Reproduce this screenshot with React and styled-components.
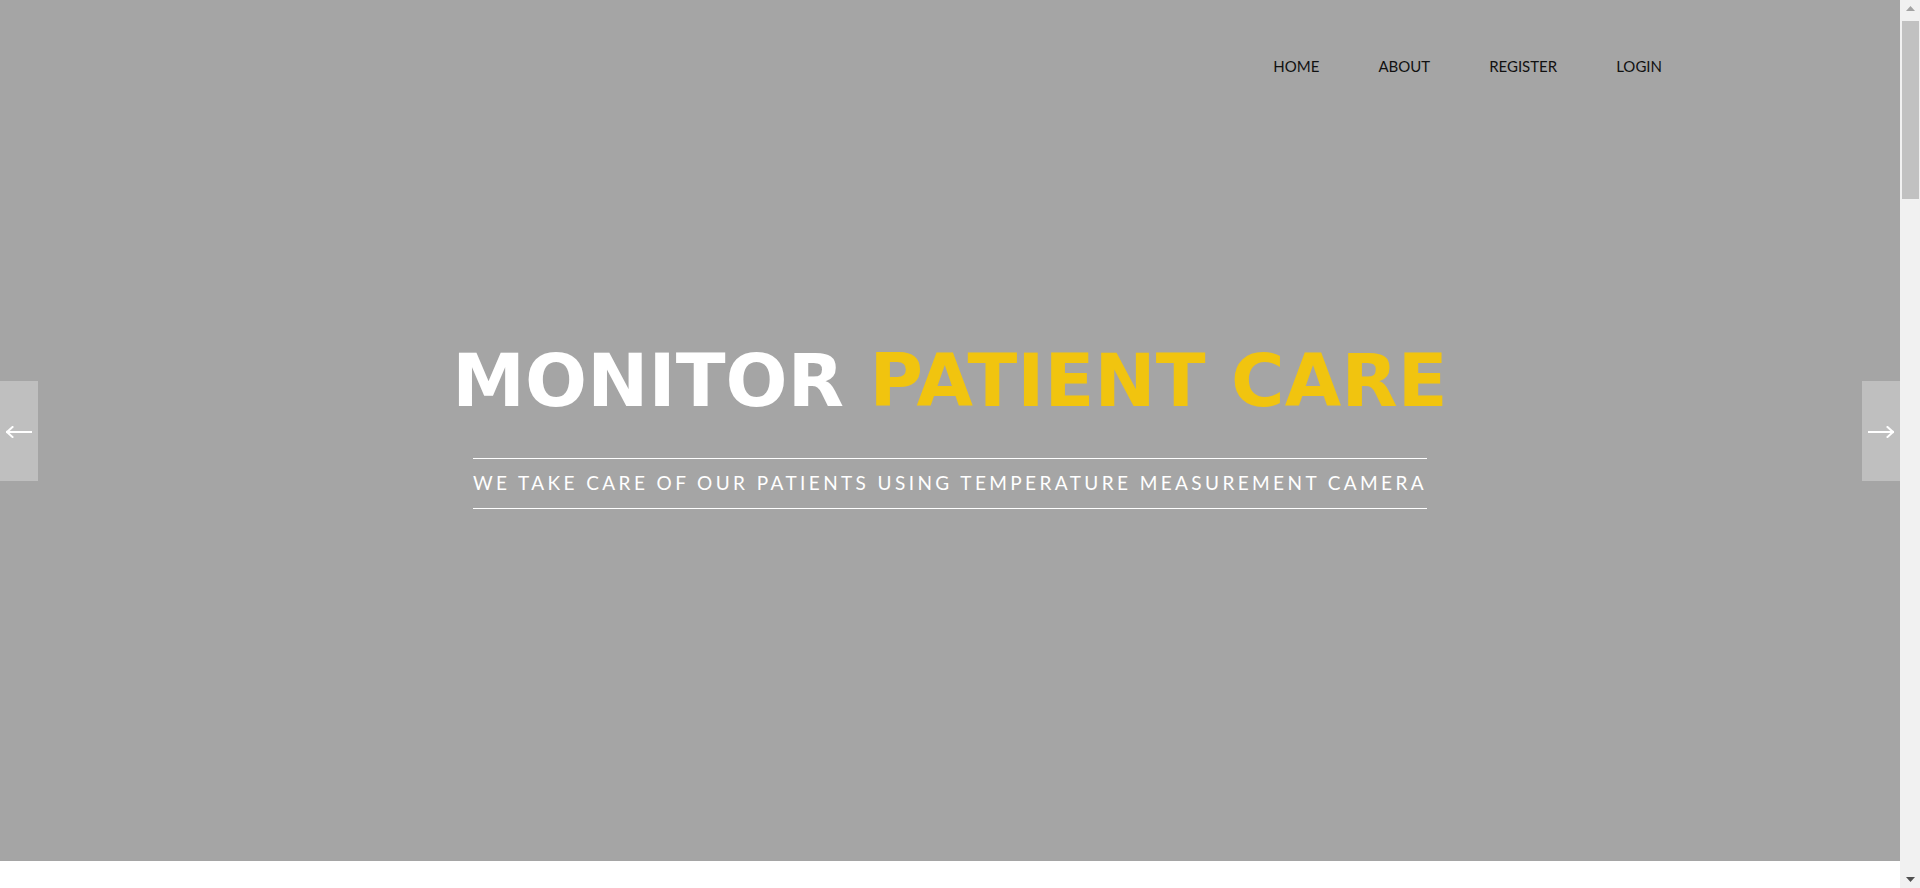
import React from "react";
import styled, { createGlobalStyle } from "styled-components";

const GlobalStyle = createGlobalStyle`
  html, body {
    margin: 0;
    padding: 0;
    background: #ffffff;
  }
  body {
    font-family: Lato, "Liberation Sans", sans-serif;
  }
  * { box-sizing: border-box; }
`;

const Page = styled.div`
  min-height: 4260px;
  margin-right: 20px;
  background: #ffffff;
`;

const Hero = styled.section`
  position: relative;
  height: 861px;
  background: #a5a5a5;
  display: flex;
  flex-direction: column;
  align-items: center;
  justify-content: center;
`;

const Header = styled.header`
  position: absolute;
  top: 0;
  left: 0;
  right: 0;
  padding-top: 57px;
`;

const NavInner = styled.nav`
  max-width: 1424px;
  margin: 0 auto;
  display: flex;
  justify-content: flex-end;
  gap: 59px;
`;

const NavLink = styled.a`
  font-family: Lato, "Liberation Sans", sans-serif;
  font-size: 15px;
  line-height: 18px;
  color: #111111;
  text-transform: uppercase;
  text-decoration: none;
`;

const Caption = styled.div`
  display: flex;
  flex-direction: column;
  align-items: center;
  margin-bottom: 21px;
`;

const Title = styled.h1`
  margin: 0;
  font-family: "DejaVu Sans", "Liberation Sans", sans-serif;
  font-weight: 700;
  font-size: 73px;
  line-height: 100px;
  letter-spacing: 0.1px;
  color: #ffffff;
  text-transform: uppercase;
  white-space: nowrap;
`;

const Accent = styled.span`
  color: #f1c40f;
`;

const Subtitle = styled.p`
  margin: 27px 0 0;
  padding: 12px 0 13px;
  border-top: 1px solid #ffffff;
  border-bottom: 1px solid #ffffff;
  font-family: Lato, "Liberation Sans", sans-serif;
  font-size: 19px;
  line-height: 24px;
  letter-spacing: 3.4px;
  color: #ffffff;
  text-transform: uppercase;
  white-space: nowrap;
`;

const ArrowButton = styled.button`
  position: absolute;
  top: 50%;
  ${(p) => (p.$side === "left" ? "left: 0;" : "right: 0;")}
  transform: translateY(-50%);
  width: 38px;
  height: 100px;
  border: none;
  padding: 2px 0 0;
  background: #bfbfbf;
  display: flex;
  align-items: center;
  justify-content: center;
  cursor: pointer;
`;

const ScrollTrack = styled.aside`
  position: fixed;
  top: 0;
  right: 0;
  width: 20px;
  height: 100vh;
  background: #f1f1f1;
  display: flex;
  flex-direction: column;
  align-items: center;
  padding: 0 1px 0 2px;
`;

const ScrollButton = styled.div`
  height: 17px;
  width: 100%;
  display: flex;
  align-items: center;
  justify-content: center;
`;

const ScrollThumb = styled.div`
  margin-top: 4px;
  width: 100%;
  height: 178px;
  background: #c1c1c1;
`;

const ScrollSpacer = styled.div`
  flex: 1;
`;

const Triangle = ({ up, color }) => (
  <svg width="9" height="5" viewBox="0 0 9 5">
    <path d={up ? "M4.5 0L9 5H0Z" : "M0 0H9L4.5 5Z"} fill={color} />
  </svg>
);

const ArrowIcon = ({ dir }) => (
  <svg width="26" height="12" viewBox="0 0 26 12" fill="none">
    {dir === "left" ? (
      <path d="M1 6H25M1 6L6.5 1M1 6L6.5 11" stroke="#ffffff" strokeWidth="2" strokeLinecap="square" />
    ) : (
      <path d="M1 6H25M25 6L19.5 1M25 6L19.5 11" stroke="#ffffff" strokeWidth="2" strokeLinecap="square" />
    )}
  </svg>
);

const links = ["Home", "About", "Register", "Login"];

export default function App() {
  return (
    <Page>
      <GlobalStyle />
      <Hero>
        <Header>
          <NavInner>
            {links.map((l) => (
              <NavLink key={l} href="#">
                {l}
              </NavLink>
            ))}
          </NavInner>
        </Header>
        <Caption>
          <Title>
            Monitor <Accent>Patient Care</Accent>
          </Title>
          <Subtitle>We take care of our patients using temperature measurement camera</Subtitle>
        </Caption>
        <ArrowButton $side="left" aria-label="Previous">
          <ArrowIcon dir="left" />
        </ArrowButton>
        <ArrowButton $side="right" aria-label="Next">
          <ArrowIcon dir="right" />
        </ArrowButton>
      </Hero>
      <ScrollTrack aria-hidden="true">
        <ScrollButton>
          <Triangle up color="#a3a3a3" />
        </ScrollButton>
        <ScrollThumb />
        <ScrollSpacer />
        <ScrollButton>
          <Triangle color="#505050" />
        </ScrollButton>
      </ScrollTrack>
    </Page>
  );
}
